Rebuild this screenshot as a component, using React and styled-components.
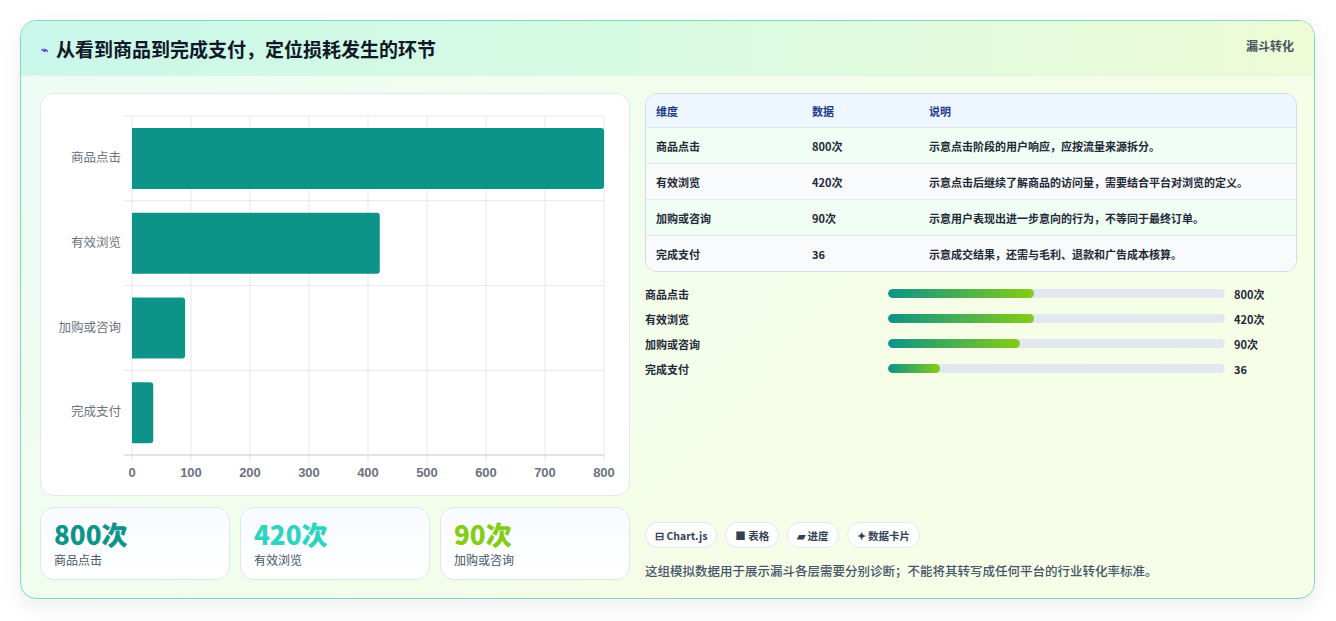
import React from "react";
import styled, { createGlobalStyle } from "styled-components";

const G = createGlobalStyle`
  body{margin:0;background:#fff;font-family:"Noto Sans CJK SC","Noto Sans",sans-serif;}
`;
const Page = styled.div`padding:20px 21px 22px 20px;`;
const Card = styled.div`
  border:1px solid #7dd9c4;border-radius:16px;overflow:hidden;
  box-shadow:0 8px 20px rgba(15,23,42,.08);
  background:linear-gradient(135deg,#ecfdf5 0%,#f5fde8 60%,#f7fee7 100%);
`;
const Header = styled.div`
  height:55px;display:flex;align-items:center;justify-content:space-between;
  padding:0 20px;box-sizing:border-box;border-bottom:1px solid #e2f3ea;
  background:linear-gradient(90deg,#c9f7ea 0%,#d9fbe2 50%,#eefbd6 100%);
`;
const Title = styled.h1`margin:0;font-size:19px;font-weight:700;color:#111827;display:flex;align-items:center;gap:8px;`;
const Tag = styled.span`font-size:12px;font-weight:700;color:#4b5563;align-self:flex-start;margin-top:16px;`;
const Body = styled.div`display:grid;grid-template-columns:590px 652px;gap:15px;padding:17px 19px 18px 19px;`;
const Col = styled.div`display:flex;flex-direction:column;`;
const ChartCard = styled.div`height:403px;background:#fff;border:1px solid #e2e8f0;border-radius:14px;box-sizing:border-box;position:relative;`;
const Stats = styled.div`display:grid;grid-template-columns:repeat(3,1fr);gap:10px;margin-top:11px;`;
const Stat = styled.div`height:73px;box-sizing:border-box;border:1px solid #dbe7f3;border-radius:14px;background:linear-gradient(180deg,#f8fbff,#fff);padding:10px 13px;`;
const StatNum = styled.div`font-size:26px;font-weight:800;line-height:32px;color:${p=>p.c};`;
const StatLbl = styled.div`font-size:12px;color:#475569;margin-top:1px;`;
const Table = styled.div`border:1px solid #cbdbe8;border-radius:12px;overflow:hidden;background:#f8fafc;`;
const Row = styled.div`display:grid;grid-template-columns:156px 117px 1fr;height:${p=>p.h||35}px;align-items:center;padding-left:10px;
  font-size:11px;font-weight:${p=>p.head?700:600};color:${p=>p.head?"#1e3a8a":"#1f2937"};
  background:${p=>p.head?"#eef6ff":p.alt?"#f8fafc":"#f0fdf4"};border-top:${p=>p.first?"none":"1px solid #e2e8f0"};`;
const Bars = styled.div`display:flex;flex-direction:column;gap:8px;margin-top:13px;`;
const BarRow = styled.div`display:grid;grid-template-columns:243px 337px 1fr;align-items:center;height:17px;font-size:11px;font-weight:700;color:#1f2937;`;
const Track = styled.div`height:9px;border-radius:5px;background:#e2e8f0;overflow:hidden;`;
const Fill = styled.div`height:100%;border-radius:5px;background:linear-gradient(90deg,#0d9488,#84cc16);`;
const Val = styled.span`padding-left:9px;`;
const Chips = styled.div`display:flex;gap:8px;margin-top:auto;`;
const Chip = styled.span`height:26px;box-sizing:border-box;padding:0 9px;border:1px solid #e2e8f0;border-radius:13px;background:#fff;
  display:flex;align-items:center;gap:4px;font-size:10.5px;font-weight:700;color:#334155;`;
const Note = styled.p`margin:13px 0 0;font-size:12.5px;color:#475569;font-weight:500;`;
const Sv = styled.svg`position:absolute;left:0;top:0;`;

const cats=[["商品点击",800],["有效浏览",420],["加购或咨询",90],["完成支付",36]];
function Chart(){
  const x0=91,x1=563,y0=22,y1=361,sc=(x1-x0)/800,bh=(y1-y0)/4;
  return <Sv width="588" height="401" fontFamily="Liberation Sans, sans-serif">
    {[0,1,2,3,4,5,6,7,8].map(i=>{const x=x0+i*59;return <g key={i}>
      <line x1={x} x2={x} y1={y0} y2={y1+7} stroke="#e5e7eb"/>
      <text x={x} y={y1+22} textAnchor="middle" fontSize="13" fill="#6b7280" fontWeight="700">{i*100}</text></g>})}
    {[0,1,2,3,4].map(i=><line key={i} x1={x0-8} x2={x1} y1={y0+i*bh} y2={y0+i*bh} stroke="#e5e7eb"/>)}
    <line x1={x0-8} x2={x1} y1={y1} y2={y1} stroke="#cbd5e1"/>
    {cats.map(([n,v],i)=>{const y=y0+i*bh+12;return <g key={n}>
      <path d={`M${x0} ${y}H${x0+v*sc-3}a3 3 0 0 1 3 3V${y+58}a3 3 0 0 1-3 3H${x0}Z`} fill="#0d9488"/>
      <text x={x0-11} y={y+34} textAnchor="end" fontSize="12.5" fill="#6b7280" fontFamily="Noto Sans CJK SC, sans-serif">{n}</text></g>})}
  </Sv>;
}

export default function App(){
  const fills=[146,146,132,52];
  return <Page><G/><Card>
    <Header><Title><span style={{color:"#4f46e5",fontSize:12}}>⌁</span>从看到商品到完成支付，定位损耗发生的环节</Title><Tag>漏斗转化</Tag></Header>
    <Body>
      <Col>
        <ChartCard><Chart/></ChartCard>
        <Stats>
          <Stat><StatNum c="#0d9488">800次</StatNum><StatLbl>商品点击</StatLbl></Stat>
          <Stat><StatNum c="#2dd4bf">420次</StatNum><StatLbl>有效浏览</StatLbl></Stat>
          <Stat><StatNum c="#84cc16">90次</StatNum><StatLbl>加购或咨询</StatLbl></Stat>
        </Stats>
      </Col>
      <Col>
        <Table>
          <Row head first h={33}><span>维度</span><span>数据</span><span>说明</span></Row>
          <Row><span>商品点击</span><span>800次</span><span>示意点击阶段的用户响应，应按流量来源拆分。</span></Row>
          <Row alt><span>有效浏览</span><span>420次</span><span>示意点击后继续了解商品的访问量，需要结合平台对浏览的定义。</span></Row>
          <Row><span>加购或咨询</span><span>90次</span><span>示意用户表现出进一步意向的行为，不等同于最终订单。</span></Row>
          <Row alt><span>完成支付</span><span>36</span><span>示意成交结果，还需与毛利、退款和广告成本核算。</span></Row>
        </Table>
        <Bars>
          {cats.map(([n,v],i)=><BarRow key={n}><span>{n}</span><Track><Fill style={{width:fills[i]}}/></Track><Val>{i<3?v+"次":v}</Val></BarRow>)}
        </Bars>
        <Chips><Chip>⊟ Chart.js</Chip><Chip>■ 表格</Chip><Chip>▰ 进度</Chip><Chip>✦ 数据卡片</Chip></Chips>
        <Note>这组模拟数据用于展示漏斗各层需要分别诊断；不能将其转写成任何平台的行业转化率标准。</Note>
      </Col>
    </Body>
  </Card></Page>;
}
